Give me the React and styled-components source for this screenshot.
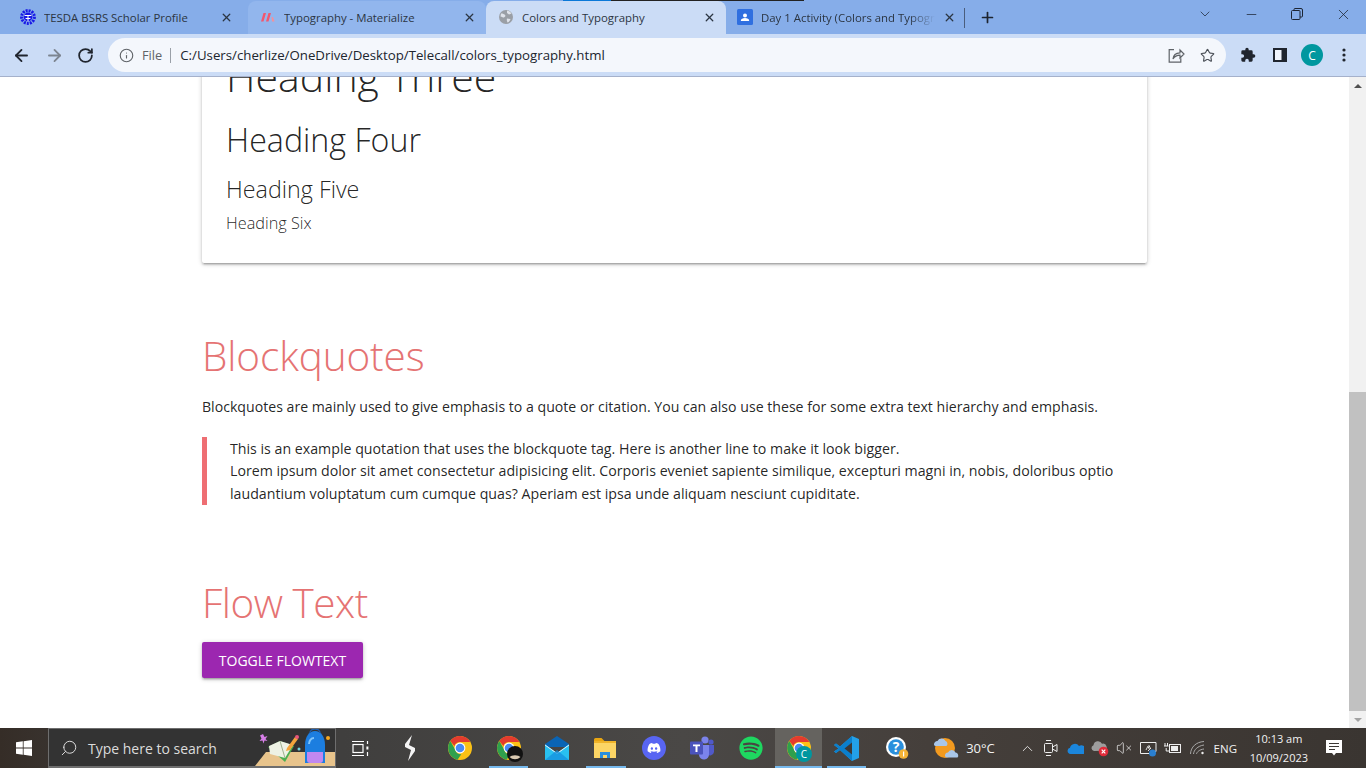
import React from 'react';
import styled, { createGlobalStyle } from 'styled-components';
import { ArrowLeft, ArrowRight, RotateCw, Info, Star, ChevronDown, ChevronUp, Minus, X, Plus, Search, VolumeX } from 'lucide-react';
import { FaDiscord, FaSpotify } from 'react-icons/fa';

const Global = createGlobalStyle`
  html, body { margin: 0; padding: 0; height: 100%; overflow: hidden; }
  body { font-family: "Open Sans", "Noto Sans", sans-serif; background: #fff; }
`;

const Screen = styled.div`
  width: 1366px;
  height: 768px;
  display: flex;
  flex-direction: column;
  overflow: hidden;
`;

/* ---------- browser chrome ---------- */
const TabStrip = styled.div`
  position: relative;
  height: 34px;
  flex: none;
  display: flex;
  align-items: flex-end;
  padding-left: 8px;
  background: #86ade9;
`;

const LoadLine = styled.div`
  position: absolute;
  top: 0;
  left: 563px;
  width: 241px;
  height: 1px;
  background: linear-gradient(to right, #0a78d8 20%, #222 20%);
`;

const Tab = styled.div`
  width: ${(p) => p.$w}px;
  height: 33px;
  margin-left: ${(p) => p.$ml || 0}px;
  padding: 0 ${(p) => p.$pr || 10}px 1px ${(p) => p.$pl || 12}px;
  box-sizing: border-box;
  display: flex;
  align-items: center;
  gap: 8px;
  flex: none;
  border-radius: 8px 8px 0 0;
  background: ${(p) => (p.$active ? '#cbdcf6' : p.$hover ? '#92b6ed' : 'transparent')};
  font-size: 11.4px;
  color: #2b3542;
`;

const TabTitle = styled.span`
  flex: 1;
  min-width: 0;
  white-space: nowrap;
  overflow: hidden;
  ${(p) => p.$fade && 'mask-image: linear-gradient(to right, #000 85%, transparent 100%);'}
`;

const TabDivider = styled.div`
  width: 1px;
  height: 20px;
  margin-bottom: 6px;
  background: #4a5d7c;
  flex: none;
`;

const NewTab = styled.div`
  width: 44px;
  height: 33px;
  display: flex;
  align-items: center;
  justify-content: center;
  flex: none;
  color: #1d2430;
`;

const WindowControls = styled.div`
  margin-left: auto;
  height: 28px;
  align-self: flex-start;
  display: flex;
  align-items: center;
  color: #1c2534;
`;

const WinButton = styled.div`
  width: 46px;
  height: 28px;
  display: flex;
  align-items: center;
  justify-content: center;
`;

const Toolbar = styled.div`
  height: 42px;
  flex: none;
  box-sizing: border-box;
  display: flex;
  align-items: flex-start;
  padding: 4px 0 0 5px;
  background: #cbdcf6;
`;

const ToolBtn = styled.div`
  width: ${(p) => p.$w || 32}px;
  height: 34px;
  flex: none;
  display: flex;
  align-items: center;
  justify-content: center;
  color: ${(p) => p.$color || '#20252e'};
`;

const UrlBar = styled.div`
  width: 1118px;
  height: 34px;
  margin: 0 6px 0 7px;
  flex: none;
  box-sizing: border-box;
  display: flex;
  align-items: center;
  padding: 0 8px 0 11px;
  border-radius: 17px;
  background: #f4f7fc;
  font-size: 13.25px;
  color: #20252e;
`;

const FileTag = styled.span`
  margin-left: 8px;
  padding-right: 8px;
  line-height: 15px;
  font-size: 12.8px;
  border-right: 1px solid #9aa0a8;
  color: #5f6368;
`;

const UrlText = styled.span`
  flex: 1;
  margin-left: 9px;
  white-space: nowrap;
`;

const Avatar = styled.div`
  width: 22px;
  height: 22px;
  border-radius: 50%;
  background: #00979f;
  color: #fff;
  font-size: 12px;
  display: flex;
  align-items: center;
  justify-content: center;
`;

const ChromeEdge = styled.div`
  height: 1px;
  flex: none;
  background: #a5b1cb;
`;

/* ---------- page ---------- */
const Viewport = styled.div`
  flex: 1;
  min-height: 0;
  display: flex;
  overflow: hidden;
`;

const Page = styled.div`
  flex: 1;
  min-width: 0;
  overflow: hidden;
`;

const Container = styled.div`
  width: 945px;
  margin: -49px auto 0;
`;

const Card = styled.div`
  padding: 24px 24px 30px;
  border-radius: 2px;
  box-shadow: 0 2px 2px 0 rgba(0,0,0,.14), 0 3px 1px -2px rgba(0,0,0,.12), 0 1px 5px 0 rgba(0,0,0,.2);
  background: #fff;
`;

const Heading = styled.div`
  font-weight: 300;
  font-size: ${(p) => p.$size}px;
  line-height: ${(p) => p.$lh}px;
  margin-top: ${(p) => p.$mt || 0}px;
  letter-spacing: ${(p) => p.$ls || 0}px;
  color: ${(p) => p.$color || 'rgba(0,0,0,.87)'};
`;

const Paragraph = styled.p`
  margin: 16px 0 0;
  font-size: 14.14px;
  line-height: 22.5px;
  color: rgba(0,0,0,.87);
`;

const Quote = styled.blockquote`
  margin: 18px 0 0;
  padding: 1px 0 0 23px;
  border-left: 5px solid #ee6e73;
  font-size: 14.19px;
  line-height: 22.5px;
  color: rgba(0,0,0,.87);
`;

const ToggleButton = styled.button`
  display: block;
  margin-top: 15px;
  width: 161px;
  height: 36px;
  padding: 0;
  border: none;
  border-radius: 2px;
  background: #9c27b0;
  color: #fff;
  font-family: inherit;
  font-size: 14px;
  font-weight: 500;
  text-transform: uppercase;
  box-shadow: 0 2px 2px 0 rgba(0,0,0,.14), 0 3px 1px -2px rgba(0,0,0,.12), 0 1px 5px 0 rgba(0,0,0,.2);
`;

const Scrollbar = styled.div`
  width: 17px;
  flex: none;
  display: flex;
  flex-direction: column;
  background: #f1f1f1;
`;

const ScrollArrow = styled.div`
  height: 17px;
  flex: none;
  display: flex;
  align-items: center;
  justify-content: center;
  &::after {
    content: '';
    border-left: 4px solid transparent;
    border-right: 4px solid transparent;
    ${(p) => (p.$down ? 'border-top: 4px solid #a3a3a3;' : 'border-bottom: 4px solid #505050;')}
  }
`;

const ScrollTrack = styled.div`
  flex: 1;
  padding-top: 298px;
  box-sizing: border-box;
  display: flex;
`;

const ScrollThumb = styled.div`
  flex: 1;
  background: #c1c1c1;
`;

/* ---------- taskbar ---------- */
const Taskbar = styled.div`
  height: 40px;
  flex: none;
  display: flex;
  align-items: center;
  background: linear-gradient(to right, #352d27 0, #3c3836 8%, #403f3e 25%, #4a4846 50%, #453f3b 68%, #3a3531 100%);
  color: #f2f2f2;
`;

const StartButton = styled.div`
  width: 48px;
  height: 40px;
  flex: none;
  display: flex;
  align-items: center;
  justify-content: center;
`;

const SearchBox = styled.div`
  position: relative;
  width: 288px;
  height: 40px;
  box-sizing: border-box;
  flex: none;
  display: flex;
  align-items: center;
  gap: 10px;
  padding: 1px 0 0 11px;
  background: #333;
  border: 1px solid #6e6e6e;
  border-bottom-width: 2px;
  font-size: 14px;
  color: #dcdcdc;
  overflow: hidden;
`;

const SearchArt = styled.svg`
  position: absolute;
  right: 0;
  bottom: 0;
`;

const Slot = styled.div`
  position: relative;
  width: ${(p) => p.$w || 48.6}px;
  height: 40px;
  flex: none;
  display: flex;
  align-items: center;
  justify-content: center;
  background: ${(p) => (p.$active ? '#65635f' : 'transparent')};
  ${(p) => p.$open && `
    &::after {
      content: '';
      position: absolute;
      left: ${p.$active ? 0 : 4.5}px;
      right: ${p.$active ? 0 : 4.5}px;
      bottom: 0;
      height: 2px;
      background: #76b9ed;
    }
  `}
`;

const Temp = styled.span`
  font-size: 13px;
  margin-left: -2px;
  width: 48.8px;
  flex: none;
`;

const Tray = styled.div`
  width: 24.3px;
  height: 40px;
  flex: none;
  display: flex;
  align-items: center;
  justify-content: center;
`;

const Lang = styled.span`
  width: 32px;
  flex: none;
  text-align: center;
  font-size: 11.5px;
`;

const Clock = styled.div`
  width: 75px;
  flex: none;
  text-align: center;
  font-size: 11px;
  line-height: 19px;
`;

const Notify = styled.div`
  width: 35px;
  flex: none;
  display: flex;
  justify-content: center;
`;

/* ---------- drawn icons ---------- */
const TesdaIcon = () => (
  <svg width="16" height="16" viewBox="0 0 16 16">
    <circle cx="8" cy="8" r="6.4" fill="none" stroke="#1a1ae6" strokeWidth="3" strokeDasharray="2 1" />
    <circle cx="8" cy="8" r="4.4" fill="#1a1ae6" />
    <path d="M4.5 6.5h7M8 6.5v6M5.6 9.5h4.8" stroke="#fff" strokeWidth="1" />
  </svg>
);

const MaterializeIcon = () => (
  <svg width="16" height="16" viewBox="0 0 16 16">
    <path d="M1 12.500 3.500 4H6L3.500 12.500zM6 12.500 8.500 4H11L8.500 12.500z" fill="#f2576e" />
    <path d="M11.500 8h1.500l1.500 4.500h-2.500z" fill="#f4909c" />
  </svg>
);

const GlobeIcon = () => (
  <svg width="16" height="16" viewBox="0 0 16 16">
    <circle cx="8" cy="8" r="7" fill="#9a9fa6" />
    <path d="M3 4.500c2 0 3 .5 4 1.500s0 2-1 2.500-2-1-3.500-1zM9 1.500c2 .5 3.500 1.500 4.500 3l-2.500 1-2-1.500zM9 9.500l3.500.5c-.5 1.500-1.500 3-3 3.500-.5-1-1-2-.5-4z" fill="#dfe3ea" />
  </svg>
);

const ClassroomIcon = () => (
  <svg width="16" height="16" viewBox="0 0 16 16">
    <rect width="16" height="16" rx="1.500" fill="#2f6fe0" />
    <circle cx="8" cy="6.400" r="2" fill="#fff" />
    <path d="M3.800 12c0-2 2-2.900 4.200-2.900s4.200.9 4.200 2.900z" fill="#fff" />
  </svg>
);

const RestoreIcon = () => (
  <svg width="12" height="12" viewBox="0 0 12 12" fill="none" stroke="#1c2534" strokeWidth="1">
    <rect x=".5" y="2.500" width="8.500" height="9" rx="1" />
    <path d="M3 2.500V1.500a1 1 0 0 1 1-1h6a1.500 1.500 0 0 1 1.500 1.500v6a1 1 0 0 1-1 1H9" />
  </svg>
);

const ShareIcon = () => (
  <svg width="17" height="16" viewBox="0 0 17 16" fill="none" stroke="#5f6368" strokeWidth="1.200">
    <path d="M6 2.600H1.200v12.600h11.600v-4" />
    <path d="M5 12c.3-3.600 3-6 7-6.200V3l4 4-4 4V8.200C9 8.200 6.500 9.600 5 12z" />
  </svg>
);

const PuzzleIcon = () => (
  <svg width="16" height="16" viewBox="0 0 24 24" fill="#20252e">
    <path d="M20.500 11H19V7a2 2 0 0 0-2-2h-4V3.500a2.500 2.500 0 0 0-5 0V5H4a2 2 0 0 0-2 2v3.800h1.500a2.700 2.700 0 0 1 0 5.400H2V20a2 2 0 0 0 2 2h3.800v-1.500a2.700 2.700 0 0 1 5.400 0V22H17a2 2 0 0 0 2-2v-4h1.500a2.500 2.500 0 0 0 0-5z" />
  </svg>
);

const PanelIcon = () => (
  <svg width="14" height="14" viewBox="0 0 14 14">
    <rect x="0" y="0" width="14" height="14" fill="#20252e" />
    <rect x="2" y="2" width="6.500" height="10" fill="#f0f4fb" />
  </svg>
);

const DotsIcon = () => (
  <svg width="4" height="14" viewBox="0 0 4 14" fill="#20252e">
    <circle cx="2" cy="2" r="1.600" />
    <circle cx="2" cy="7" r="1.600" />
    <circle cx="2" cy="12" r="1.600" />
  </svg>
);

const WindowsLogo = () => (
  <svg width="16" height="16" viewBox="0 0 16 16" fill="#fff">
    <path d="M0 2.300 6.800 1.300v6.300H0zM7.600 1.200 16 0v7.600H7.600zM0 8.400h6.800v6.300L0 13.700zM7.600 8.400H16V16l-8.400-1.200z" />
  </svg>
);

const TaskView = () => (
  <svg width="17" height="17" viewBox="0 0 17 17" fill="none" stroke="#fff" strokeWidth="1.200">
    <path d="M0 1.500h12M0 15.500h12" />
    <rect x="1" y="4.500" width="10" height="8" />
    <path d="M15.500 1v3" />
    <rect x="14.400" y="6.500" width="2" height="3" fill="#fff" stroke="none" />
    <path d="M15.500 12v4" />
  </svg>
);

const StackIcon = () => (
  <svg width="14" height="26" viewBox="0 0 14 26" fill="#f4f4f4">
    <path d="M9 0 2 9v3l6 3-3 11 7-10v-3L6 10z" />
  </svg>
);

const ChromeIcon = ({ size = 24, children }) => (
  <svg width={size} height={size} viewBox="0 0 24 24" style={{ overflow: 'visible' }}>
    <circle cx="12" cy="12" r="12" fill="#fbc116" />
    <path d="M12 0a12 12 0 0 1 10.400 6H12a6 6 0 0 0-5.600 3.900L2.300 5A12 12 0 0 1 12 0z" fill="#e33b2e" />
    <path d="M2.300 5l5 8.700a6 6 0 0 0 6 4.600L9.500 23.700A12 12 0 0 1 2.300 5z" fill="#2fa04d" />
    <circle cx="12" cy="12" r="5.400" fill="#fff" />
    <circle cx="12" cy="12" r="4.300" fill="#4a8af4" />
    {children}
  </svg>
);

const MailIcon = () => (
  <svg width="24" height="24" viewBox="0 0 24 24">
    <path d="M0 8 12 0l12 8v3H0z" fill="#0a64b4" />
    <path d="M0 8.500 12 17 24 8.500V24H0z" fill="#28c0f0" />
    <path d="M0 8.500l12 8.500 12-8.500v1L12 18 0 9.500z" fill="#e8f6fd" />
    <path d="M0 24 12 14l12 10z" fill="#1490df" opacity=".75" />
  </svg>
);

const FolderIcon = () => (
  <svg width="23" height="20" viewBox="0 0 23 20">
    <path d="M0 1.500A1.500 1.500 0 0 1 1.500 0h6l3 3H0z" fill="#e8a512" />
    <rect y="3" width="22" height="17" fill="#fcd565" />
    <path d="M0 3h22v2H0z" fill="#f0b429" />
    <path d="M6 20v-6h10v6h-3v-3H9v3z" fill="#2a8fdc" />
  </svg>
);

const Badge = ({ fill, children, size = 24 }) => (
  <svg width={size} height={size} viewBox="0 0 24 24">
    <circle cx="12" cy="12" r="12" fill={fill} />
    {children}
  </svg>
);

const TeamsIcon = () => (
  <svg width="25" height="24" viewBox="0 0 25 24">
    <circle cx="15" cy="4" r="3.600" fill="#7b83eb" />
    <circle cx="21" cy="6" r="2.600" fill="#5059c9" />
    <path d="M17 9h7v7a4 4 0 0 1-7 2z" fill="#5059c9" />
    <path d="M7 9h12v9a5 5 0 0 1-10 1z" fill="#7b83eb" />
    <rect y="5.500" width="13" height="13" rx="1" fill="#4b53bc" />
    <path d="M3 8.500h7v1.800H7.500V16h-2v-5.700H3z" fill="#fff" />
  </svg>
);

const VsCodeIcon = () => (
  <svg width="25" height="25" viewBox="0 0 25 25">
    <path d="M18 0 25 3v19l-7 3L6 14l-4 3-2-1.500 4.500-3L0 9l2-1.500 4 3z" fill="#23a0e8" />
    <path d="M18 0v25L6 14l-4 3-2-1.500 4.500-3L0 9l2-1.500 4 3z" fill="#0b7fcc" />
    <path d="M18 6.500v12l-7.500-6z" fill="#3c3836" />
  </svg>
);

const HelpIcon = () => (
  <svg width="24" height="24" viewBox="0 0 24 24">
    <circle cx="11" cy="11" r="10" fill="#fff" />
    <circle cx="11" cy="11" r="7.800" fill="#2a8fdc" />
    <text x="11" y="16" fontSize="14" fontWeight="700" textAnchor="middle" fill="#fff" fontFamily="Open Sans">?</text>
    <circle cx="18.500" cy="18" r="4.800" fill="#f5b335" />
    <rect x="18" y="15.500" width="1.200" height="5" fill="#fff" />
  </svg>
);

const WeatherIcon = () => (
  <svg width="26" height="24" viewBox="0 0 26 24">
    <circle cx="12" cy="12" r="10" fill="#f29a1f" />
    <path d="M1 9a3.500 3.500 0 0 1 3.500-4 4.500 4.500 0 0 1 8 0 3 3 0 0 1 1 5H3a2 2 0 0 1-2-1z" fill="#a9c6e8" />
    <path d="M12 20a3 3 0 0 1 3-3.500 4 4 0 0 1 7.500 0 3 3 0 0 1 2 5H14a2 2 0 0 1-2-1.500z" fill="#a9c6e8" />
  </svg>
);

const MeetIcon = () => (
  <svg width="14" height="18" viewBox="0 0 14 18" fill="none" stroke="#eee" strokeWidth="1">
    <rect x=".5" y="4.500" width="8" height="9" rx="1" />
    <path d="M8.500 8l4.500-2.500v7L8.500 10M2 1.500h5M2 16.500h5" />
  </svg>
);

const CloudIcon = () => (
  <svg width="17" height="11" viewBox="0 0 17 11">
    <path d="M3.500 11a3.200 3.200 0 0 1-.5-6.300 5 5 0 0 1 9-1.700 4 4 0 0 1 4.800 8z" fill="#1b86dc" />
  </svg>
);

const CloudErrorIcon = () => (
  <svg width="18" height="17" viewBox="0 0 18 17">
    <path d="M3 11a3 3 0 0 1-.5-5.800 4.500 4.500 0 0 1 8.500-1.500 3.500 3.500 0 0 1 2 7z" fill="#9d9d9d" />
    <circle cx="12.500" cy="11.500" r="4.800" fill="#e02b3a" />
    <path d="M10.700 9.700l3.600 3.600m0-3.600l-3.600 3.600" stroke="#fff" strokeWidth="1.200" />
  </svg>
);

const ScreenIcon = () => (
  <svg width="17" height="17" viewBox="0 0 17 17" fill="none" stroke="#eee" strokeWidth="1">
    <path d="M.5 2.500h15.500v9h-4M.5 2.500v11h9" />
    <path d="M6 10l2-4h2l-2 2h3l-3 3" strokeWidth=".9" />
    <circle cx="12.500" cy="13" r="3.500" fill="#2a7fd0" stroke="none" />
  </svg>
);

const BatteryIcon = () => (
  <svg width="18" height="12" viewBox="0 0 18 12" fill="none" stroke="#eee" strokeWidth="1">
    <rect x="5.500" y="2.500" width="11" height="8" />
    <rect x="7" y="4" width="7" height="5" fill="#eee" stroke="none" />
    <path d="M1 1v3M3.500 1v3M0 4h4.500M2.200 6v3h3" />
  </svg>
);

const WifiIcon = () => (
  <svg width="15" height="14" viewBox="0 0 15 14" fill="none" stroke="#a9a9a9" strokeWidth="1">
    <path d="M.5 13C.8 6 6 1 14 .5M3.500 13c.3-4 4-8 10.500-9M6.500 13c.3-2 3-4.500 7.500-5" />
    <circle cx="12.500" cy="12" r="1.200" fill="#eee" stroke="none" />
  </svg>
);

const NotifyIcon = () => (
  <svg width="16" height="16" viewBox="0 0 16 16">
    <path d="M0 0h16v13h-6l-2 2.500L6 13H0z" fill="#fff" />
    <path d="M3 3.500h10M3 6.500h10M3 9.500h6" stroke="#3c3836" strokeWidth="1" />
  </svg>
);

const SearchArtwork = () => (
  <SearchArt width="80" height="38" viewBox="0 0 80 38">
    <path d="M0 38 11 24h69v14z" fill="#e8c48c" />
    <path d="M8 6l1.500 3 3-1-2 3 2 2-3-.5-1 3-1-3-3 .5 2-2.500-1.500-3z" fill="#d77fe8" />
    <path d="M13 19l12-6 14 5-9 16z" fill="#4caf50" />
    <path d="M14 18l11-5 13 4-8 13-15-4z" fill="#eef2e4" />
    <path d="M25 13l5 17" stroke="#9fb08f" strokeWidth="1" />
    <path d="M32 20l8-11 3 2-8 11-4 1z" fill="#f3a43c" />
    <circle cx="42" cy="9" r="2" fill="#e8577a" />
    <circle cx="44" cy="21" r="1.500" fill="#6fd4e0" />
    <path d="M50 35V17C50 9 54 3 60 3s10 6 10 14v18z" fill="#1c7ee0" />
    <path d="M55 5c0-2 2-4 5-4s5 2 5 4" fill="none" stroke="#1f5fb0" strokeWidth="1.500" />
    <path d="M52 24h16v8a3 3 0 0 1-3 3H55a3 3 0 0 1-3-3z" fill="#c088f0" />
    <path d="M54 16c0-3 2-6 5-6" stroke="#7fc4fa" strokeWidth="2" fill="none" />
    <circle cx="73" cy="10" r="2" fill="#f7a81e" />
  </SearchArt>
);

export default function App() {
  return (
    <Screen>
      <Global />
      <TabStrip>
        <LoadLine />
        <Tab $w={235}>
          <TesdaIcon />
          <TabTitle>TESDA BSRS Scholar Profile</TabTitle>
          <X size={13} strokeWidth={2.4} />
        </Tab>
        <Tab $w={238} $ml={5} $hover>
          <MaterializeIcon />
          <TabTitle>Typography - Materialize</TabTitle>
          <X size={13} strokeWidth={2.4} />
        </Tab>
        <Tab $w={240} $active $pl={12}>
          <GlobeIcon />
          <TabTitle>Colors and Typography</TabTitle>
          <X size={13} strokeWidth={2.4} />
        </Tab>
        <Tab $w={238} $pl={11} $pr={8}>
          <ClassroomIcon />
          <TabTitle $fade>Day 1 Activity (Colors and Typography)</TabTitle>
          <X size={13} strokeWidth={2.4} />
        </Tab>
        <TabDivider />
        <NewTab><Plus size={17} strokeWidth={2.4} /></NewTab>
        <WindowControls>
          <WinButton><ChevronDown size={16} strokeWidth={1.1} /></WinButton>
          <WinButton><Minus size={15} strokeWidth={1.2} /></WinButton>
          <WinButton><RestoreIcon /></WinButton>
          <WinButton><X size={17} strokeWidth={1.1} /></WinButton>
        </WindowControls>
      </TabStrip>

      <Toolbar>
        <ToolBtn $w={33}><ArrowLeft size={19} strokeWidth={2.3} /></ToolBtn>
        <ToolBtn $w={32} $color="#7d8591"><ArrowRight size={19} strokeWidth={2.3} /></ToolBtn>
        <ToolBtn $w={31}><RotateCw size={17} strokeWidth={2.5} /></ToolBtn>
        <UrlBar>
          <Info size={15} strokeWidth={1.8} color="#5f6368" />
          <FileTag>File</FileTag>
          <UrlText>C:/Users/cherlize/OneDrive/Desktop/Telecall/colors_typography.html</UrlText>
          <ToolBtn $w={40}><ShareIcon /></ToolBtn>
          <ToolBtn $w={22}><Star size={15} strokeWidth={1.8} color="#4b5058" /></ToolBtn>
        </UrlBar>
        <ToolBtn><PuzzleIcon /></ToolBtn>
        <ToolBtn><PanelIcon /></ToolBtn>
        <ToolBtn><Avatar>C</Avatar></ToolBtn>
        <ToolBtn><DotsIcon /></ToolBtn>
      </Toolbar>
      <ChromeEdge />

      <Viewport>
        <Page>
          <Container>
            <Card>
              <Heading $size={41} $lh={48}>Heading Three</Heading>
              <Heading $size={32.2} $lh={38} $mt={21}>Heading Four</Heading>
              <Heading $size={23.3} $lh={27} $mt={17}>Heading Five</Heading>
              <Heading $size={16.3} $lh={19} $mt={11}>Heading Six</Heading>
            </Card>
            <Heading $size={40.5} $lh={48} $mt={69} $ls={-0.1} $color="#e57373">Blockquotes</Heading>
            <Paragraph>Blockquotes are mainly used to give emphasis to a quote or citation. You can also use these for some extra text hierarchy and emphasis.</Paragraph>
            <Quote>
              This is an example quotation that uses the blockquote tag. Here is another line to make it look bigger.<br />
              Lorem ipsum dolor sit amet consectetur adipisicing elit. Corporis eveniet sapiente similique, excepturi magni in, nobis, doloribus optio laudantium voluptatum cum cumque quas? Aperiam est ipsa unde aliquam nesciunt cupiditate.
            </Quote>
            <Heading $size={40.5} $lh={48} $mt={74} $ls={-0.5} $color="#e57373">Flow Text</Heading>
            <ToggleButton>Toggle Flowtext</ToggleButton>
          </Container>
        </Page>
        <Scrollbar>
          <ScrollArrow />
          <ScrollTrack><ScrollThumb /></ScrollTrack>
          <ScrollArrow $down />
        </Scrollbar>
      </Viewport>

      <Taskbar>
        <StartButton><WindowsLogo /></StartButton>
        <SearchBox>
          <Search size={18} strokeWidth={1.3} style={{ transform: 'scaleX(-1)' }} />
          Type here to search
          <SearchArtwork />
        </SearchBox>
        <Slot $w={49}><TaskView /></Slot>
        <Slot $w={50.7}><StackIcon /></Slot>
        <Slot><ChromeIcon /></Slot>
        <Slot $open>
          <ChromeIcon>
            <circle cx="18" cy="18" r="8" fill="#111" />
            <path d="M12.500 21a6 3 0 0 1 11 0 8 8 0 0 1-11 0z" fill="#d8c8b0" />
          </ChromeIcon>
        </Slot>
        <Slot><MailIcon /></Slot>
        <Slot $open><FolderIcon /></Slot>
        <Slot><Badge fill="#5865f2"><FaDiscord x="5" y="5" size={14} color="#fff" /></Badge></Slot>
        <Slot $w={47.5}><TeamsIcon /></Slot>
        <Slot $w={49}><FaSpotify size={24} color="#1ed760" /></Slot>
        <Slot $w={47} $active $open>
          <ChromeIcon>
            <circle cx="17" cy="18" r="8" fill="#00979f" />
            <text x="17" y="22" fontSize="10" textAnchor="middle" fill="#fff" fontFamily="Open Sans">C</text>
          </ChromeIcon>
        </Slot>
        <Slot $w={48} $open><VsCodeIcon /></Slot>
        <Slot $w={54}><HelpIcon /></Slot>
        <Slot $w={44}><WeatherIcon /></Slot>
        <Temp>30°C</Temp>
        <Tray><ChevronUp size={17} strokeWidth={1.2} /></Tray>
        <Tray><MeetIcon /></Tray>
        <Tray><CloudIcon /></Tray>
        <Tray><CloudErrorIcon /></Tray>
        <Tray><VolumeX size={16} strokeWidth={1.1} /></Tray>
        <Tray><ScreenIcon /></Tray>
        <Tray><BatteryIcon /></Tray>
        <Tray><WifiIcon /></Tray>
        <Lang>ENG</Lang>
        <Clock>10:13 am<br />10/09/2023</Clock>
        <Notify><NotifyIcon /></Notify>
      </Taskbar>
    </Screen>
  );
}
